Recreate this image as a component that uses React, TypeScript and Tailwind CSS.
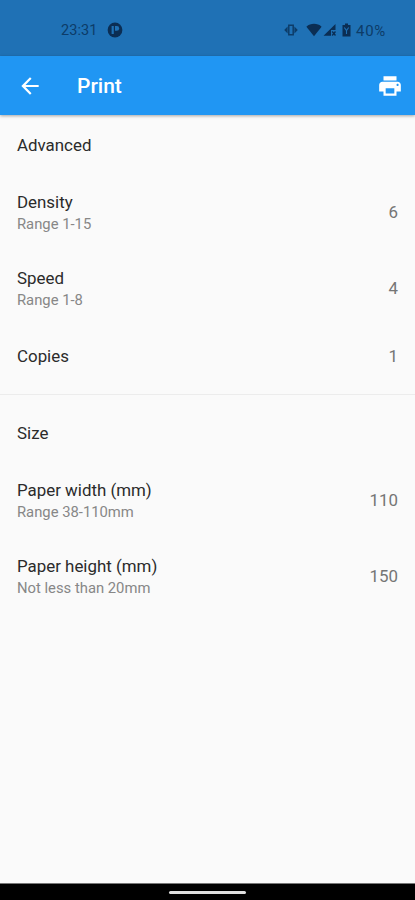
import React from 'react';

type RowProps = { title: string; hint?: string; value?: string };

function Row({ title, hint, value }: RowProps) {
  return (
    <div className={`flex items-center justify-between px-[17px] ${hint ? 'h-[76px]' : 'h-[59px]'}`}>
      <div className={`flex flex-col ${hint ? 'pt-[2px]' : ''}`}>
        <span className="text-[16.9px] leading-[22px] text-[#2b2b2b]">{title}</span>
        {hint && <span className="text-[14.8px] leading-[22px] text-[#878787]">{hint}</span>}
      </div>
      {value && <span className="text-[16.9px] leading-5 text-[#757575]">{value}</span>}
    </div>
  );
}

function StatusBar() {
  return (
    <div className="flex h-[56px] shrink-0 items-center justify-between bg-[#1f71b5] pt-1 pr-[27px] pl-[61px] text-[#0d3c68]">
      <div className="flex items-center">
        <span className="w-[37px] pt-px text-[14.5px] leading-5 tracking-[0.1px]">23:31</span>
        <svg className="ml-[9px] size-4" viewBox="0 0 16 16">
          <circle cx="8" cy="8" r="7.4" fill="#0b2e54" />
          <path d="M4.600 4h2.200v8H4.600z" fill="#1f71b5" />
          <path d="M8 4h1.800a2.400 2.400 0 0 1 0 4.800H8z" fill="#1f71b5" />
        </svg>
      </div>
      <div className="flex items-center">
        <svg className="h-4 w-[14px]" viewBox="0 0 14 16">
          <path d="M4.800 3.200h4.400v9.600H4.800z" fill="none" stroke="currentColor" strokeWidth="1.500" />
          <path d="M3.600 4.500v7L.2 8zM10.400 4.500v7L13.800 8z" fill="currentColor" />
        </svg>
        <svg className="ml-2 h-4 w-4" viewBox="0 0 16 16">
          <path d="M.4 4.700C4.600.9 11.400.9 15.600 4.700L8 14.300z" fill="#0b2e54" />
        </svg>
        <svg className="ml-px h-4 w-[13px]" viewBox="0 0 13 16">
          <path d="M12.500 2v6H8v5.800H.5z" fill="#0b2e54" />
          <path d="M9.200 9.500l3.300 4M12.500 9.500l-3.300 4" stroke="#0b2e54" strokeWidth="1.300" />
        </svg>
        <svg className="ml-[6px] h-4 w-[9px]" viewBox="0 0 9 16">
          <path d="M3 1.500h3V3h2.500v11.500h-8V3H3z" fill="#0b2e54" />
          <path d="M2.300 5.500l2.200 3 2.200-3M4.500 8.500v3.500" fill="none" stroke="#1f71b5" strokeWidth="1.100" />
        </svg>
        <span className="ml-[5px] w-[32px] pt-px text-[15px] leading-5 tracking-[0.700px] whitespace-nowrap">40%</span>
      </div>
    </div>
  );
}

function AppBar() {
  return (
    <header className="relative flex h-[59px] shrink-0 items-center bg-[#2096f3] pt-px pr-3 pl-[17px] text-white shadow-[0_1px_3px_rgba(0,0,0,0.35)]">
      <svg className="size-[26px]" viewBox="0 0 24 24" fill="currentColor">
        <path d="M20 11H7.830l5.590-5.590L12 4l-8 8 8 8 1.410-1.410L7.830 13H20v-2z" />
      </svg>
      <h1 className="ml-[34px] flex-1 text-[21px] leading-6 font-medium">Print</h1>
      <svg className="size-[26px]" viewBox="0 0 24 24" fill="currentColor">
        <path d="M19 8H5c-1.660 0-3 1.340-3 3v6h4v4h12v-4h4v-6c0-1.660-1.340-3-3-3zm-3 11H8v-5h8v5zm3-7c-.550 0-1-.450-1-1s.450-1 1-1 1 .450 1 1-.450 1-1 1zm-1-9H6v4h12V3z" />
      </svg>
    </header>
  );
}

export default function App() {
  return (
    <div className="flex h-[900px] w-[415px] flex-col overflow-hidden bg-[#fafafa] font-['Roboto',sans-serif]">
      <StatusBar />
      <AppBar />
      <main className="flex-1">
        <Row title="Advanced" />
        <Row title="Density" hint="Range 1-15" value="6" />
        <Row title="Speed" hint="Range 1-8" value="4" />
        <Row title="Copies" value="1" />
        <hr className="mt-[9px] mb-2 border-t border-[#ececec]" />
        <Row title="Size" />
        <Row title="Paper width (mm)" hint="Range 38-110mm" value="110" />
        <Row title="Paper height (mm)" hint="Not less than 20mm" value="150" />
      </main>
      <footer className="flex h-[17px] shrink-0 items-center justify-center border-t border-[#777] bg-black pt-px">
        <div className="h-[3px] w-[77px] rounded-full bg-[#e0e0e0]" />
      </footer>
    </div>
  );
}
